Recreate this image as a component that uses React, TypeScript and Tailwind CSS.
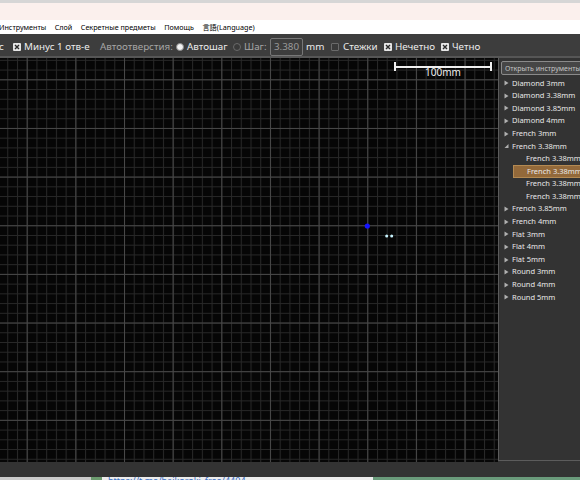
import type React from "react"

type TreeRow = {
  label: string
  level: 0 | 1
  arrow?: "closed" | "open"
  selected?: boolean
}

const rows: TreeRow[] = [
  { label: "Diamond 3mm", level: 0, arrow: "closed" },
  { label: "Diamond 3.38mm", level: 0, arrow: "closed" },
  { label: "Diamond 3.85mm", level: 0, arrow: "closed" },
  { label: "Diamond 4mm", level: 0, arrow: "closed" },
  { label: "French 3mm", level: 0, arrow: "closed" },
  { label: "French 3.38mm", level: 0, arrow: "open" },
  { label: "French 3.38mm(1)", level: 1 },
  { label: "French 3.38mm(2)", level: 1, selected: true },
  { label: "French 3.38mm(3)", level: 1 },
  { label: "French 3.38mm(4)", level: 1 },
  { label: "French 3.85mm", level: 0, arrow: "closed" },
  { label: "French 4mm", level: 0, arrow: "closed" },
  { label: "Flat 3mm", level: 0, arrow: "closed" },
  { label: "Flat 4mm", level: 0, arrow: "closed" },
  { label: "Flat 5mm", level: 0, arrow: "closed" },
  { label: "Round 3mm", level: 0, arrow: "closed" },
  { label: "Round 4mm", level: 0, arrow: "closed" },
  { label: "Round 5mm", level: 0, arrow: "closed" },
]

const menuItems = ["Инструменты", "Слой", "Секретные предметы", "Помощь", "言語(Language)"]

const CheckBox: React.FC<{ checked?: boolean; className?: string }> = ({ checked, className = "" }) =>
  checked ? (
    <span className={`shrink-0 w-[8px] h-[8px] bg-[#e6e6e6] rounded-[1px] flex items-center justify-center ${className}`}>
      <svg width="6" height="6" viewBox="0 0 6 6">
        <path d="M1 1 L5 5 M5 1 L1 5" stroke="#2a2a2a" strokeWidth="1.4" />
      </svg>
    </span>
  ) : (
    <span className={`shrink-0 w-[8px] h-[8px] bg-[#3a3a3a] border border-[#6a6a6a] rounded-[1px] ${className}`} />
  )

const Radio: React.FC<{ checked?: boolean; className?: string }> = ({ checked, className = "" }) =>
  checked ? (
    <span className={`shrink-0 w-[8px] h-[8px] rounded-full bg-[#f2f2f2] border border-[#8a8a8a] ${className}`} />
  ) : (
    <span className={`shrink-0 w-[8px] h-[8px] rounded-full bg-[#3a3a3a] border border-[#6a6a6a] ${className}`} />
  )

const Arrow: React.FC<{ kind: "closed" | "open" }> = ({ kind }) => (
  <svg width="5" height="6" viewBox="0 0 5 6" className="shrink-0">
    {kind === "closed" ? (
      <path d="M0.5 0.5 L4.5 3 L0.5 5.5 Z" fill="#b0b0b0" />
    ) : (
      <path d="M4.5 1 L4.5 5 L0.5 5 Z" fill="#b0b0b0" />
    )}
  </svg>
)

const App: React.FC = () => {
  return (
    <div className="w-[580px] h-[480px] overflow-hidden flex flex-col font-['Noto_Sans','Noto_Sans_CJK_JP',sans-serif] bg-[#333]">
      <div className="h-[3px] bg-[#d6d6d6]" />
      <div className="h-[17px] bg-[#fbf0ed]" />

      {/* menu bar */}
      <div className="h-[14px] pt-[1px] bg-white flex items-center text-[7.2px] text-black leading-none whitespace-nowrap">
        {menuItems.map((m, i) => (
          <span key={m} className={i === 0 ? "ml-[-1px]" : "ml-[8.5px]"}>
            {m}
          </span>
        ))}
      </div>

      {/* toolbar */}
      <div className="h-[24px] pt-[3px] bg-[#3d3d3d] border-b-2 border-[#565656] flex items-center text-[9.8px] text-[#ececec] leading-none whitespace-nowrap">
        <span className="ml-[-1px] w-[7px] shrink-0">с</span>
        <CheckBox checked className="ml-[7px]" />
        <span className="ml-[3px] w-[65px] shrink-0">Минус 1 отв-е</span>
        <span className="ml-[11px] w-[71px] shrink-0 text-[#a6a6a6]">Автоотверстия:</span>
        <Radio checked className="ml-[5px]" />
        <span className="ml-[3px] w-[39px] shrink-0">Автошаг</span>
        <Radio className="ml-[7px]" />
        <span className="ml-[3px] w-[22px] shrink-0 text-[#a6a6a6]">Шаг:</span>
        <span className="ml-[4px] w-[33px] h-[18px] shrink-0 border border-[#777] rounded-[2px] flex items-center justify-end pr-[3px] text-[#9a9a9a]">
          3.380
        </span>
        <span className="ml-[3px] w-[16px] shrink-0">mm</span>
        <CheckBox className="ml-[9px]" />
        <span className="ml-[4px] w-[34px] shrink-0">Стежки</span>
        <CheckBox checked className="ml-[7px]" />
        <span className="ml-[3px] w-[39px] shrink-0">Нечетно</span>
        <CheckBox checked className="ml-[7px]" />
        <span className="ml-[3px]">Четно</span>
      </div>

      {/* work area */}
      <div className="flex-1 flex min-h-0">
        <div className="relative w-[498px] h-full bg-[#060606] overflow-hidden">
          <svg width="498" height="404" className="block">
            <defs>
              <pattern id="minor" width="9.73" height="9.73" x="7.24" y="1.84" patternUnits="userSpaceOnUse">
                <path d="M0 0.5 H9.73 M0.5 0 V9.73" stroke="#282828" strokeWidth="1" fill="none" />
              </pattern>
              <pattern id="major" width="48.65" height="48.65" x="26.7" y="21.3" patternUnits="userSpaceOnUse">
                <path d="M0 0.5 H48.65 M0.5 0 V48.65" stroke="#484848" strokeWidth="1" fill="none" />
              </pattern>
            </defs>
            <rect width="498" height="404" fill="url(#minor)" />
            <rect width="498" height="404" fill="url(#major)" />
            <circle cx="367.3" cy="168" r="2.6" fill="#1414ff" />
            <circle cx="386.7" cy="178" r="1.5" fill="#c8f4ff" />
            <circle cx="391.7" cy="178" r="1.5" fill="#c8f4ff" />
          </svg>

          {/* scale bar */}
          <div className="absolute left-[394px] top-[4px] w-[98px] h-[9px] border-x-2 border-[#f0f0f0] flex items-center">
            <div className="w-full h-[2px] bg-[#f0f0f0]" />
          </div>
          <div className="absolute left-[394px] top-[9px] w-[98px] text-center text-[10px] text-[#f0f0f0] leading-none">
            100mm
          </div>
        </div>

        {/* tools panel */}
        <div className="flex-1 h-[403px] border-l border-b border-[#5c5c5c] bg-[#333] overflow-hidden">
          <div className="mt-[3px] ml-[2px] h-[14px] w-[100px] border border-[#8a8a8a] rounded-[2px] bg-[#464646] flex items-center pl-[3px] text-[7px] text-[#c4c4c4] whitespace-nowrap leading-none">
            Открыть инструменты
          </div>
          <div className="mt-[2px]">
            {rows.map((r) => (
              <div key={r.label} className="h-[12.6px] flex items-center whitespace-nowrap text-[7.5px] leading-none text-[#e8e8e8]">
                {r.level === 0 ? (
                  <>
                    <span className="w-[7px] ml-[5px] flex">{r.arrow && <Arrow kind={r.arrow} />}</span>
                    <span className="ml-[1px]">{r.label}</span>
                  </>
                ) : (
                  <span
                    className={`ml-[14px] flex-1 h-full flex items-center pl-[13px] ${
                      r.selected ? "bg-[#93693a] border border-[#b48a52]" : ""
                    }`}
                  >
                    {r.label}
                  </span>
                )}
              </div>
            ))}
          </div>
        </div>
      </div>

      {/* status bar */}
      <div className="h-[15px] bg-[#333]" />

      {/* host window strip */}
      <div className="h-[3px] flex overflow-hidden">
        <div className="w-[91px] bg-[#cacaca]" />
        <div className="w-[11px] bg-[#6b9a6e]" />
        <div className="w-[271px] bg-[#ececec] overflow-hidden">
          <div className="ml-[6px] mt-[-1px] text-[9px] leading-none text-[#3a6fc4] whitespace-nowrap">
            https://t.me/haikoroki_free/4404
          </div>
        </div>
        <div className="flex-1 bg-[#6a9b7b]" />
      </div>
    </div>
  )
}

export default App
